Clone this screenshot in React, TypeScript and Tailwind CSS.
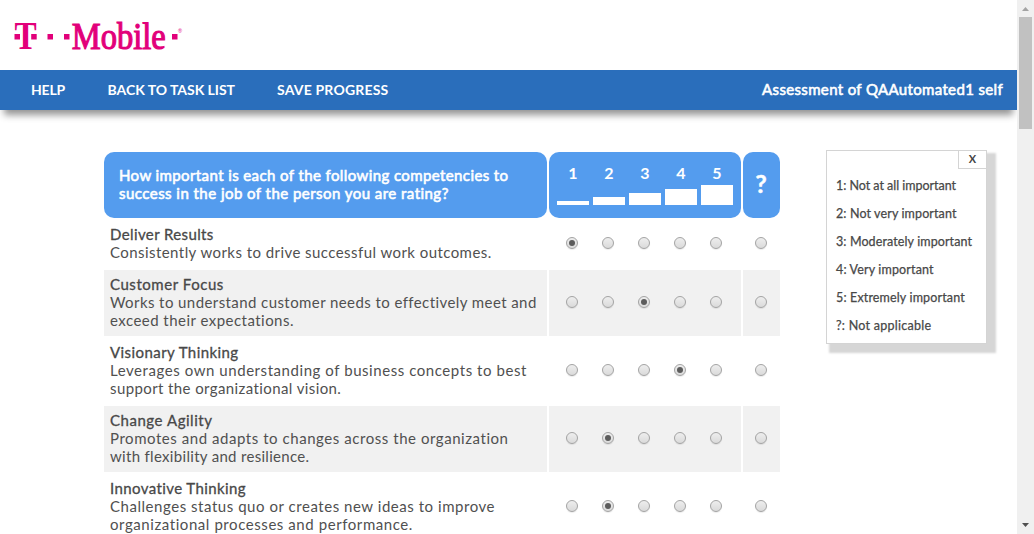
type Line = { text: string; track: string };
type Item = { title: Line; lines: Line[]; rating: number };

const items: Item[] = [
  {
    title: { text: 'Deliver Results', track: 'tracking-[0.39px]' },
    lines: [{ text: 'Consistently works to drive successful work outcomes.', track: 'tracking-[0.44px]' }],
    rating: 1,
  },
  {
    title: { text: 'Customer Focus', track: 'tracking-[0.55px]' },
    lines: [
      { text: 'Works to understand customer needs to effectively meet and', track: 'tracking-[0.42px]' },
      { text: 'exceed their expectations.', track: 'tracking-[0.47px]' },
    ],
    rating: 3,
  },
  {
    title: { text: 'Visionary Thinking', track: 'tracking-[0.43px]' },
    lines: [
      { text: 'Leverages own understanding of business concepts to best', track: 'tracking-[0.56px]' },
      { text: 'support the organizational vision.', track: 'tracking-[0.4px]' },
    ],
    rating: 4,
  },
  {
    title: { text: 'Change Agility', track: 'tracking-[0.54px]' },
    lines: [
      { text: 'Promotes and adapts to changes across the organization', track: 'tracking-[0.55px]' },
      { text: 'with flexibility and resilience.', track: 'tracking-[0.31px]' },
    ],
    rating: 2,
  },
  {
    title: { text: 'Innovative Thinking', track: 'tracking-[0.4px]' },
    lines: [
      { text: 'Challenges status quo or creates new ideas to improve', track: 'tracking-[0.54px]' },
      { text: 'organizational processes and performance.', track: 'tracking-[0.57px]' },
    ],
    rating: 2,
  },
];

const scale = [
  { n: 1, bar: 'h-1' },
  { n: 2, bar: 'h-2' },
  { n: 3, bar: 'h-3' },
  { n: 4, bar: 'h-4' },
  { n: 5, bar: 'h-5' },
];

const legend: Line[] = [
  { text: '1: Not at all important', track: 'tracking-[-0.03px]' },
  { text: '2: Not very important', track: 'tracking-[0.12px]' },
  { text: '3: Moderately important', track: 'tracking-[0.11px]' },
  { text: '4: Very important', track: 'tracking-[0.15px]' },
  { text: '5: Extremely important', track: 'tracking-[0.15px]' },
  { text: '?: Not applicable', track: 'tracking-[0.26px]' },
];

function Logo() {
  return (
    <svg width="180" height="50" viewBox="0 0 180 50" fill="#e2007a" className="block" role="img" aria-label="T-Mobile">
      <text transform="translate(0.6 39) scale(0.82 1)" fontFamily="Liberation Serif, serif" fontWeight="700" fontSize="40.5">T</text>
      <rect x="0.5" y="24" width="5.5" height="5.5" />
      <rect x="17.2" y="24" width="5.5" height="5.5" />
      <rect x="33.5" y="24" width="5.5" height="5.5" />
      <rect x="50" y="24" width="5.5" height="5.5" />
      <text transform="translate(57.8 38.7) scale(0.845 1)" fontFamily="Liberation Serif, serif" fontSize="38.5" stroke="#e2007a" strokeWidth="1.2">Mobile</text>
      <rect x="158" y="24" width="5.5" height="5.5" />
      <text x="164" y="23" fontFamily="Liberation Sans, sans-serif" fontSize="5.5">®</text>
    </svg>
  );
}

function Radio({ on }: { on: boolean }) {
  return (
    <span
      role="radio"
      aria-checked={on}
      className="flex size-3 items-center justify-center rounded-full border border-[#a3a3a3] bg-linear-to-b from-[#eeeeee] to-[#dadada] shadow-[0_1px_1px_rgba(0,0,0,0.08)]"
    >
      {on && <span className="size-1.5 rounded-full bg-[#5c5c5c]" />}
    </span>
  );
}

function Row({ item, shaded }: { item: Item; shaded: boolean }) {
  const bg = shaded ? 'bg-[#f1f1f1]' : 'bg-white';
  return (
    <div className="flex gap-0.5">
      <div className={`w-[443px] pt-[5px] pb-[7px] pl-1.5 text-[15px] leading-[18px] whitespace-nowrap text-[#505050] ${bg}`}>
        <div className={`text-[#484848] [-webkit-text-stroke:0.3px_#484848] ${item.title.track}`}>{item.title.text}</div>
        {item.lines.map((l) => (
          <div key={l.text} className={l.track}>{l.text}</div>
        ))}
      </div>
      <div className={`flex w-48 items-center gap-6 pb-0.5 pl-[17px] ${bg}`}>
        {scale.map((s) => (
          <Radio key={s.n} on={s.n === item.rating} />
        ))}
      </div>
      <div className={`flex w-[37px] items-center pb-0.5 pl-3 ${bg}`}>
        <Radio on={false} />
      </div>
    </div>
  );
}

export default function App() {
  return (
    <div className="flex h-[534px] w-[1034px] overflow-hidden bg-white font-['Lato',sans-serif]">
      <div className="h-full w-[1017px] overflow-hidden">
        <header className="h-[70px] pt-2.5 pl-3.5">
          <Logo />
        </header>
        <nav className="flex h-10 items-center bg-[#2a6ebb] pr-3.5 pb-px pl-[31px] text-sm font-bold whitespace-nowrap text-white shadow-[0_9px_7px_-4px_rgba(0,0,0,0.42)]">
          <a className="w-[76.5px] tracking-[-0.2px]">HELP</a>
          <a className="w-[169.5px] tracking-[-0.03px]">BACK TO TASK LIST</a>
          <a className="tracking-[0.19px]">SAVE PROGRESS</a>
          <span className="ml-auto pt-px text-[15px] font-normal tracking-[0.35px] [-webkit-text-stroke:0.6px_white]">
            Assessment of QAAutomated1 self
          </span>
        </nav>

        <main className="flex items-start pt-[42px] pl-[104px]">
          <section className="flex w-[676px] flex-col gap-0.5">
            <div className="flex h-[66px] gap-0.5 text-white">
              <div className="w-[443px] rounded-[10px] bg-[#549cee] pt-3.5 pl-[15px] text-[15px] leading-[18px] whitespace-nowrap [-webkit-text-stroke:0.6px_white]">
                <div className="tracking-[0.4px]">How important is each of the following competencies to</div>
                <div className="tracking-[0.46px]">success in the job of the person you are rating?</div>
              </div>
              <div className="flex w-48 items-end gap-1 rounded-[10px] bg-[#549cee] pb-[13px] pl-2">
                {scale.map((s) => (
                  <div key={s.n} className="flex h-10 w-8 flex-col justify-between text-center">
                    <span className="h-4 text-base leading-4 font-bold">{s.n}</span>
                    <span className={`w-8 bg-white ${s.bar}`} />
                  </div>
                ))}
              </div>
              <div className="flex w-[37px] items-center justify-center rounded-[10px] bg-[#549cee] pr-px pb-1 text-[25px] leading-none font-bold [-webkit-text-stroke:0.4px_white]">
                ?
              </div>
            </div>
            {items.map((item, i) => (
              <Row key={item.title.text} item={item} shaded={i % 2 === 1} />
            ))}
          </section>

          <aside className="-mt-0.5 ml-[46px] h-[194px] w-[161px] border border-[#d4d4d4] bg-white shadow-[6px_6px_2px_3px_#d6d6d6]">
            <button className="-mt-px -mr-px ml-auto flex h-[19px] w-[29px] items-center justify-center border border-[#d4d4d4] text-[11px] font-bold text-[#444]">
              X
            </button>
            <ul className="pt-[3px] pl-[9px] text-[12.5px] leading-7 whitespace-nowrap text-[#484848] [-webkit-text-stroke:0.25px_#484848]">
              {legend.map((l) => (
                <li key={l.text} className={l.track}>{l.text}</li>
              ))}
            </ul>
          </aside>
        </main>
      </div>

      <div className="flex h-full w-[17px] flex-col items-center bg-[#f0f0f0]">
        <svg width="17" height="17" className="block shrink-0">
          <path d="M5 11h7L8.5 7z" fill="#a3a3a3" />
        </svg>
        <div className="h-28 w-[13px] bg-[#c1c1c1]" />
        <svg width="17" height="17" className="mt-auto block shrink-0">
          <path d="M5 6h7L8.5 10z" fill="#505050" />
        </svg>
      </div>
    </div>
  );
}
